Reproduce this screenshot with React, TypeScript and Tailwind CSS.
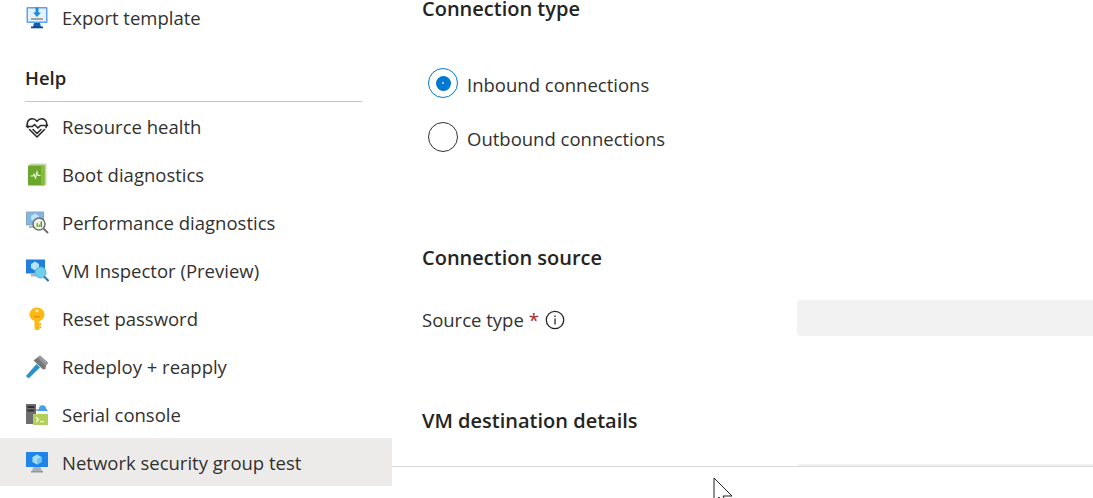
import React from 'react';

const ExportIcon = () => (
  <svg width="24" height="24" viewBox="0 0 24 24">
    <rect x="1.500" y="1" width="21" height="16" rx="1" fill="#5ea0ef" />
    <rect x="3" y="2.500" width="18" height="13" fill="#e4f2fb" />
    <path d="M9 17h6l1 4H8z" fill="#0f5fb5" />
    <rect x="6" y="20.500" width="12" height="1.800" fill="#0a4a94" />
    <path d="M10.500 1.500h3v5h2.500L12 11 8 6.500h2.500z" fill="#1f8ae0" />
    <rect x="6" y="12" width="12" height="2" fill="#a3a3a3" />
  </svg>
);

const HeartIcon = () => (
  <svg width="24" height="24" viewBox="0 0 24 24" fill="none" stroke="#2b2b2b" strokeWidth="1.600" strokeLinejoin="round" strokeLinecap="round">
    <path d="M3 12.500C.8 8.500 3 4 7 3.800c2-.1 3.700.8 5 2.400 1.300-1.600 3-2.500 5-2.400 4 .2 6.200 4.700 4 8.700" />
    <path d="M1.500 11.500h6l2-2 3.500 3.500 2.500-2.500h7" />
    <path d="m4.500 14.500 7.500 7.500 7.500-7.500" />
    <path d="m8 14.500 4 4 4-4" />
  </svg>
);

const BootIcon = () => (
  <svg width="24" height="24" viewBox="0 0 24 24">
    <path d="M3 3 6 0.500h15.500V22H19z" fill="#c8d8a8" />
    <rect x="3" y="2.500" width="16.500" height="20" rx="1" fill="#6aa52c" />
    <rect x="16" y="2.500" width="3.500" height="20" fill="#86bc40" />
    <path d="M5.500 13h2.500l1-2 1.500 4 1.500-6 1 3.500h2.500" fill="none" stroke="#eef7dc" strokeWidth="1.100" />
  </svg>
);

const PerfIcon = () => (
  <svg width="24" height="24" viewBox="0 0 24 24">
    <rect x="1" y="0.500" width="18" height="14" fill="#8ba7bf" />
    <rect x="2" y="1.500" width="16" height="12" fill="#7fb8e6" />
    <path d="M4 15h9v2H4z" fill="#b5b5b5" />
    <path d="M10 2.500 14 5v3.500l-4 2-4-2V5z" fill="#c3e4f8" />
    <circle cx="14" cy="13" r="6" fill="#f2f2ee" stroke="#6f6f6f" strokeWidth="1.500" />
    <path d="m18.500 17.500 4.500 4.500" stroke="#6f6f6f" strokeWidth="2" />
    <path d="M11.500 12h1.500v4h-1.500zM13.500 13.500H15V16h-1.500z" fill="#76b82a" />
    <path d="M15.500 10.500H17V16h-1.500z" fill="#4e9a27" />
  </svg>
);

const InspectorIcon = () => (
  <svg width="24" height="24" viewBox="0 0 24 24">
    <rect x="1" y="0.500" width="19" height="14" fill="#1f7fe0" />
    <path d="M6 15h7v2.500H6z" fill="#b5b5b5" />
    <path d="M10 2.500 14 5V9l-4 2.500L6 9V5z" fill="#b9e3f8" />
    <circle cx="15.500" cy="13.500" r="5.500" fill="#6fd0ee" stroke="#4fb5dc" />
    <path d="m19 17.500 4.500 4.500" stroke="#1d78b5" strokeWidth="2" />
  </svg>
);

const KeyIcon = () => (
  <svg width="24" height="24" viewBox="0 0 24 24">
    <path d="M12 .500c4.500 0 7.500 3.500 7.500 7 0 3-2 5.500-5 6.500v9H11l-1.500-1.500V14c-3-1-5-3.500-5-6.500 0-3.500 3-7 7.500-7z" fill="#fdb813" />
    <circle cx="12" cy="3.800" r="1.500" fill="#fff1b8" />
    <path d="M14.500 16.500H16v1.500h-1.500zM14.500 19.500H16V21h-1.500z" fill="#f29a0c" />
    <rect x="9" y="9" width="6" height="1.300" fill="#e98f0b" />
  </svg>
);

const HammerIcon = () => (
  <svg width="24" height="24" viewBox="0 0 24 24">
    <path d="M11.500 9 15 12.500 3.500 23.500 1 21z" fill="#2a93c9" />
    <path d="m8.500 5.500 6.500-5 8 7.500-2 2.500-.5 3.500-2.500.5z" fill="#77787a" />
    <path d="m13 3 7 7.500 3-2.500-8-7.500z" fill="#96979a" />
  </svg>
);

const SerialIcon = () => (
  <svg width="24" height="24" viewBox="0 0 24 24">
    <rect x="1" y="1" width="10" height="20" fill="#6d6e70" />
    <rect x="2.500" y="3" width="7" height="2" fill="#2f3133" />
    <rect x="2.500" y="6.500" width="7" height="2" fill="#2f3133" />
    <path d="M11 7h5" stroke="#8b3fb0" strokeWidth="1" />
    <path d="M14 6a3.500 3.500 0 0 1 7-.500 2.500 2.500 0 0 1 1.500 2.500H13a2 2 0 0 1 1-2" fill="#3fa4e0" />
    <rect x="8" y="11" width="15" height="11" fill="#b2d15a" />
    <path d="m11 14 2.500 2.500L11 19" fill="none" stroke="#fff" strokeWidth="1.200" />
    <rect x="15" y="18" width="4" height="1.200" fill="#fff" />
  </svg>
);

const VmIcon = () => (
  <svg width="24" height="24" viewBox="0 0 24 24">
    <rect x="1" y="1" width="22" height="15" rx="0.500" fill="#1e86ea" />
    <path d="M8.500 16h7l1.500 4H7z" fill="#a9b2ba" />
    <rect x="6" y="20" width="12" height="1.500" fill="#8f989f" />
    <path d="M12 3.500 16.500 6v5L12 13.500 7.500 11V6z" fill="#a9def7" />
    <path d="M12 8 16.500 6v5L12 13.500z" fill="#6cc4ef" />
  </svg>
);

const navItems = [
  { label: 'Resource health', icon: <HeartIcon /> },
  { label: 'Boot diagnostics', icon: <BootIcon /> },
  { label: 'Performance diagnostics', icon: <PerfIcon /> },
  { label: 'VM Inspector (Preview)', icon: <InspectorIcon /> },
  { label: 'Reset password', icon: <KeyIcon /> },
  { label: 'Redeploy + reapply', icon: <HammerIcon /> },
  { label: 'Serial console', icon: <SerialIcon /> },
  { label: 'Network security group test', icon: <VmIcon />, active: true },
];

const App: React.FC = () => {
  return (
    <div className="flex h-[498px] w-[1093px] overflow-hidden bg-white font-['Open_Sans',sans-serif] text-[18.500px] text-[#323130]">
      {/* Sidebar */}
      <div className="w-[392px] shrink-0">
        <div className="mt-[-6px] flex h-[48px] items-center gap-[13px] pl-[25px]">
          <ExportIcon />
          <span>Export template</span>
        </div>
        <div className="mt-[14px] mr-[30px] ml-[25px] flex h-[46px] items-center border-b border-[#c8c6c4] pb-[1px] font-semibold text-[#252423]">
          Help
        </div>
        {navItems.map((item) => (
          <div
            key={item.label}
            className={`flex h-[48px] items-center gap-[13px] pt-[2px] pl-[25px] ${item.active ? 'bg-[#edebe9]' : ''}`}
          >
            {item.icon}
            <span>{item.label}</span>
          </div>
        ))}
      </div>

      {/* Main form */}
      <div className="flex flex-1 flex-col">
        <div className="h-[466px] overflow-hidden pl-[30px]">
          <h2 className="mt-[-6px] h-[30px] text-[20px] font-semibold leading-[30px] text-[#252423]">Connection type</h2>

          <div className="mt-[44px] flex flex-col gap-[24px] pl-[6px]">
            <label className="flex h-[30px] gap-[9px]">
              <span className="flex h-[30px] w-[30px] items-center justify-center rounded-full border border-[#0078d4]">
                <span className="flex h-[15px] w-[15px] items-center justify-center rounded-full bg-[#0078d4]">
                  <span className="h-[2px] w-[2px] rounded-full bg-[#cfe6f7]" />
                </span>
              </span>
              <span className="pt-[2px] leading-[30px]">Inbound connections</span>
            </label>
            <label className="flex h-[30px] gap-[9px]">
              <span className="h-[30px] w-[30px] rounded-full border border-[#323130]" />
              <span className="pt-[2px] leading-[30px]">Outbound connections</span>
            </label>
          </div>

          <h2 className="mt-[91px] h-[30px] text-[20px] font-semibold leading-[30px] text-[#252423]">Connection source</h2>

          <div className="mt-[27px] flex h-[36px] items-center">
            <div className="flex w-[375px] items-center pt-[4px]">
              <span>Source type</span>
              <span className="ml-[5px] text-[#a4262c]">*</span>
              <svg className="ml-[6px]" width="20" height="20" viewBox="0 0 20 20" fill="none">
                <circle cx="10" cy="10" r="8.700" stroke="#252423" strokeWidth="1.300" />
                <rect x="9.400" y="8.500" width="1.300" height="6" fill="#252423" />
                <rect x="9.400" y="5.500" width="1.300" height="1.500" fill="#252423" />
              </svg>
            </div>
            <div className="h-[36px] flex-1 rounded-l-[3px] bg-[#f2f2f2]" />
          </div>

          <h2 className="mt-[70px] h-[30px] text-[20px] font-semibold leading-[30px] text-[#252423]">VM destination details</h2>

          <div className="mt-[28px] ml-[375px] h-[36px] rounded-l-[3px] bg-[#f2f2f2]" />
        </div>
        <div className="relative flex-1 border-t border-[#d9d9d9]">
          {/* mouse pointer */}
          <svg className="absolute top-[10px] left-[321px]" width="20" height="30" viewBox="0 0 20 30">
            <path d="M1 1v24l5-5 3 7 4-2-3-6h9z" fill="#fff" stroke="#222" strokeWidth="1" />
          </svg>
        </div>
      </div>
    </div>
  );
};

export default App;
